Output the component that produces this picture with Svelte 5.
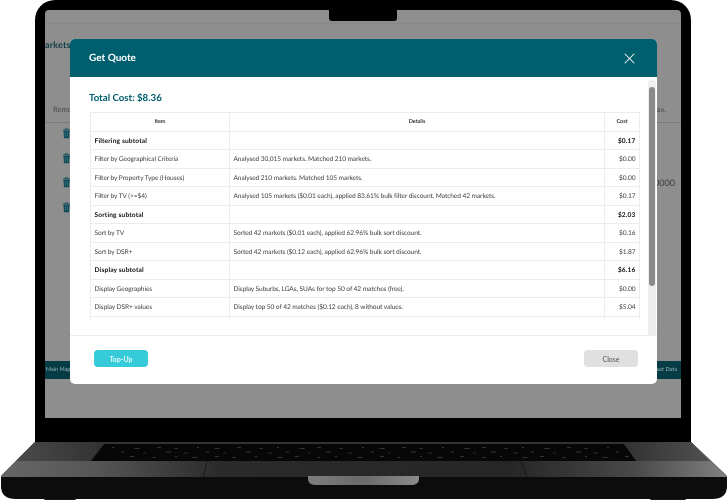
<script>
  const rows = [
    { item: 'Filtering subtotal', details: '', cost: '$0.17', bold: true },
    { item: 'Filter by Geographical Criteria', details: 'Analysed 30,015 markets. Matched 210 markets.', cost: '$0.00' },
    { item: 'Filter by Property Type (Houses)', details: 'Analysed 210 markets. Matched 105 markets.', cost: '$0.00' },
    { item: 'Filter by TV (>=$4)', details: 'Analysed 105 markets ($0.01 each), applied 83.61% bulk filter discount. Matched 42 markets.', cost: '$0.17' },
    { item: 'Sorting subtotal', details: '', cost: '$2.03', bold: true },
    { item: 'Sort by TV', details: 'Sorted 42 markets ($0.01 each), applied 62.96% bulk sort discount.', cost: '$0.16' },
    { item: 'Sort by DSR+', details: 'Sorted 42 markets ($0.12 each), applied 62.96% bulk sort discount.', cost: '$1.87' },
    { item: 'Display subtotal', details: '', cost: '$6.16', bold: true },
    { item: 'Display Geographies', details: 'Display Suburbs, LGAs, SUAs for top 50 of 42 matches (free).', cost: '$0.00' },
    { item: 'Display DSR+ values', details: 'Display top 50 of 42 matches ($0.12 each), 8 without values.', cost: '$5.04' },
    { item: '', details: '', cost: '' }
  ];

  const backRows = [
    { value: '' },
    { value: '' },
    { value: '0000' },
    { value: '' }
  ];

  // scattered key legends on the keyboard
  const keys = [];
  for (let r = 0; r < 3; r++) {
    for (let i = 0; i < 25; i++) {
      keys.push({
        x: 112 + i * 20.500 + r * 9 + (i * 7 % 5),
        y: 5 + r * 4.500 + (i % 2),
        w: 2 + (i * 3 + r) % 4
      });
    }
  }
</script>

<div class="page">
  <div class="lid">
    <div class="screen">
      <div class="notch"></div>
      <div class="back">
        <div class="back-top"></div>
        <div class="back-title">arkets</div>
        <div class="back-head"><span>Remove</span><span>Max.</span></div>
        {#each backRows as row}
          <div class="back-row">
            <svg class="trash" viewBox="0 0 10 12" width="9" height="11">
              <path d="M1 2.200h8M3.500 2V.9h3V2" fill="none" stroke="#0c4b5b" stroke-width="1" />
              <path d="M1.600 3.200h6.800l-.6 8H2.200z" fill="#0c4b5b" />
              <path d="M3.800 4.500v5M6.200 4.500v5" stroke="#6c8a90" stroke-width=".6" />
            </svg>
            <span class="back-value">{row.value}</span>
          </div>
        {/each}
        <div class="back-space"></div>
        <div class="back-bar"><span>Main Map</span><span>Reset Data</span></div>
      </div>

      <div class="modal">
        <header class="modal-head">
          <span class="modal-title">Get Quote</span>
          <svg viewBox="0 0 12 12" width="11" height="11">
            <path d="M.8.8l10.400 10.400M11.200.8L.8 11.200" stroke="#fff" stroke-width="1.100" fill="none" />
          </svg>
        </header>
        <div class="modal-body">
          <div class="content">
            <h2>Total Cost: $8.36</h2>
            <div class="table-clip">
              <table>
                <thead>
                  <tr><th class="c1">Item</th><th>Details</th><th class="c3">Cost</th></tr>
                </thead>
                <tbody>
                  {#each rows as row}
                    <tr class:bold={row.bold}>
                      <td>{row.item}</td>
                      <td>{row.details}</td>
                      <td class="num">{row.cost}</td>
                    </tr>
                  {/each}
                </tbody>
              </table>
            </div>
          </div>
          <div class="scroll-track"><div class="scroll-thumb"></div></div>
        </div>
        <footer class="modal-foot">
          <button class="topup">Top-Up</button>
          <button class="close">Close</button>
        </footer>
      </div>
    </div>
  </div>

  <svg class="base" viewBox="0 0 728 60" width="728" height="60">
    <defs>
      <linearGradient id="deck" x1="0" x2="1" y1="0" y2="0">
        <stop offset="0" stop-color="#666" />
        <stop offset=".13" stop-color="#565656" />
        <stop offset=".3" stop-color="#2b2b2b" />
        <stop offset=".7" stop-color="#262626" />
        <stop offset=".87" stop-color="#484848" />
        <stop offset="1" stop-color="#808080" />
      </linearGradient>
      <linearGradient id="deckTop" x1="0" x2="1" y1="0" y2="0">
        <stop offset="0" stop-color="#4a4a4a" />
        <stop offset=".12" stop-color="#333" />
        <stop offset=".88" stop-color="#333" />
        <stop offset="1" stop-color="#505050" />
      </linearGradient>
      <linearGradient id="latch" x1="0" x2="1" y1="0" y2="0">
        <stop offset="0" stop-color="#7d7d7d" />
        <stop offset=".5" stop-color="#6a6a6a" />
        <stop offset="1" stop-color="#8a8a8a" />
      </linearGradient>
    </defs>
    <rect x="44" y="55" width="32" height="3" rx="1.500" fill="#1a1a1a" />
    <rect x="650" y="55" width="36" height="3" rx="1.500" fill="#1a1a1a" />
    <path d="M35 0H691L726 33Q727 34 727 36V44Q727 57 712 57H16Q1 57 1 44V36Q1 34 2 33Z" fill="#0c0c0c" />
    <path d="M35 0H691L726 33Q727 34 727 35H1Q1 34 2 33Z" fill="url(#deck)" />
    <path d="M35 0H691L710 19H16Z" fill="url(#deckTop)" />
    <path d="M104 2H624L636 19H91Z" fill="#070707" />
    {#each keys as k}
      <rect x={k.x} y={k.y} width={k.w} height="1" fill="#343434" />
    {/each}
    <path d="M203.500 35L207 19M527 35L521 19" stroke="#111" stroke-width=".8" />
    <path d="M308 34H419V37Q419 42 413 43H314Q308 42 308 37Z" fill="url(#latch)" />
  </svg>
</div>

<style>
  :global(body) {
    margin: 0;
    background: #fff;
  }

  .page {
    width: 728px;
    height: 502px;
    overflow: hidden;
    font-family: Lato, "Open Sans", sans-serif;
    text-rendering: geometricPrecision;
    filter: blur(.3px);
  }

  .lid {
    box-sizing: border-box;
    width: 656px;
    height: 442px;
    margin-left: 35px;
    padding: 10px 10px 24px;
    background: #000;
    border-radius: 20px 20px 0 0;
  }

  .screen {
    position: relative;
    height: 408px;
    border-radius: 4px 4px 0 0;
    background: #8e8e8e;
  }

  .notch {
    position: absolute;
    top: 0;
    left: 284px;
    width: 68px;
    height: 11px;
    background: #000;
    border-radius: 0 0 3px 3px;
  }

  .back {
    height: 100%;
    display: flex;
    flex-direction: column;
    overflow: hidden;
    color: #3f3f3f;
  }

  .back-top {
    height: 13px;
    flex: none;
    border-bottom: 1px solid #888;
  }

  .back-title {
    flex: none;
    height: 58px;
    margin-top: 15px;
    font-size: 9px;
    line-height: 12px;
    font-weight: 700;
    color: #0d3c46;
    letter-spacing: .2px;
  }

  .back-head {
    display: flex;
    justify-content: space-between;
    align-items: center;
    flex: none;
    height: 25px;
    padding: 0 15px 0 8px;
    font-size: 7.500px;
    color: #4b4b4b;
    border-bottom: 1px solid #7a7a7a;
  }

  .back-row {
    display: flex;
    justify-content: space-between;
    align-items: center;
    flex: none;
    box-sizing: border-box;
    height: 24.500px;
    padding: 0 6px 3px 17px;
  }

  .back-value {
    font-size: 9px;
    color: #3a3a3a;
  }

  .back-space {
    flex: 1;
  }

  .back-bar {
    display: flex;
    justify-content: space-between;
    align-items: center;
    flex: none;
    height: 18px;
    margin-bottom: 39px;
    padding: 0 4px 0 1px;
    background: #053c46;
    color: #9fb4b8;
    font-size: 5.500px;
  }

  .modal {
    position: absolute;
    top: 29px;
    left: 25px;
    width: 587px;
    height: 345px;
    display: flex;
    flex-direction: column;
    background: #fff;
    border-radius: 5px;
    overflow: hidden;
  }

  .modal-head {
    flex: none;
    height: 38px;
    display: flex;
    justify-content: space-between;
    align-items: center;
    padding: 0 22px 0 19px;
    background: #005f6f;
    color: #fff;
  }

  .modal-title {
    font-size: 10px;
    font-weight: 700;
  }

  .modal-body {
    flex: 1;
    min-height: 0;
    display: flex;
    border-bottom: 1px solid #eee;
  }

  .content {
    flex: 1;
    min-width: 0;
    padding: 0 8px 0 19px;
  }

  h2 {
    margin: 0;
    height: 35px;
    padding-top: 15px;
    box-sizing: border-box;
    font-size: 9.700px;
    line-height: 12px;
    font-weight: 700;
    color: #005f6f;
  }

  .table-clip {
    height: 207px;
    margin-left: 1px;
    overflow: hidden;
  }

  table {
    width: 550px;
    table-layout: fixed;
    border-collapse: collapse;
    font-size: 6.600px;
    letter-spacing: -.08px;
    color: #3f3f3f;
  }

  th, td {
    height: 18.500px;
    box-sizing: border-box;
    padding: .5px 3.500px 0;
    border: 1px solid #ececec;
    white-space: nowrap;
    overflow: hidden;
  }

  th {
    font-size: 5.500px;
    font-weight: 700;
    color: #333;
    text-align: center;
  }

  .c1 {
    width: 139px;
  }

  .c3 {
    width: 35px;
  }

  .num {
    text-align: right;
  }

  .bold td {
    font-weight: 700;
    letter-spacing: .15px;
    color: #111;
  }

  .scroll-track {
    flex: none;
    align-self: flex-start;
    box-sizing: border-box;
    width: 8px;
    height: 256px;
    margin: 3px 1px 0 0;
    padding: 7px 1px 0;
    background: #eee;
    border-radius: 3px;
  }

  .scroll-thumb {
    height: 199px;
    background: #8a8a8a;
    border-radius: 3px;
  }

  .modal-foot {
    flex: none;
    height: 48px;
    display: flex;
    justify-content: space-between;
    align-items: flex-start;
    padding: 14px 19px 0 24px;
    box-sizing: border-box;
  }

  button {
    width: 54px;
    height: 17px;
    padding: 0;
    border: 0;
    border-radius: 4px;
    font-family: inherit;
    font-size: 7px;
    font-weight: 700;
  }

  .topup {
    background: #35cbd8;
    color: #e4f8fa;
  }

  .close {
    background: #e0e0e0;
    color: #555;
    font-weight: 400;
  }

  .base {
    display: block;
  }
</style>
